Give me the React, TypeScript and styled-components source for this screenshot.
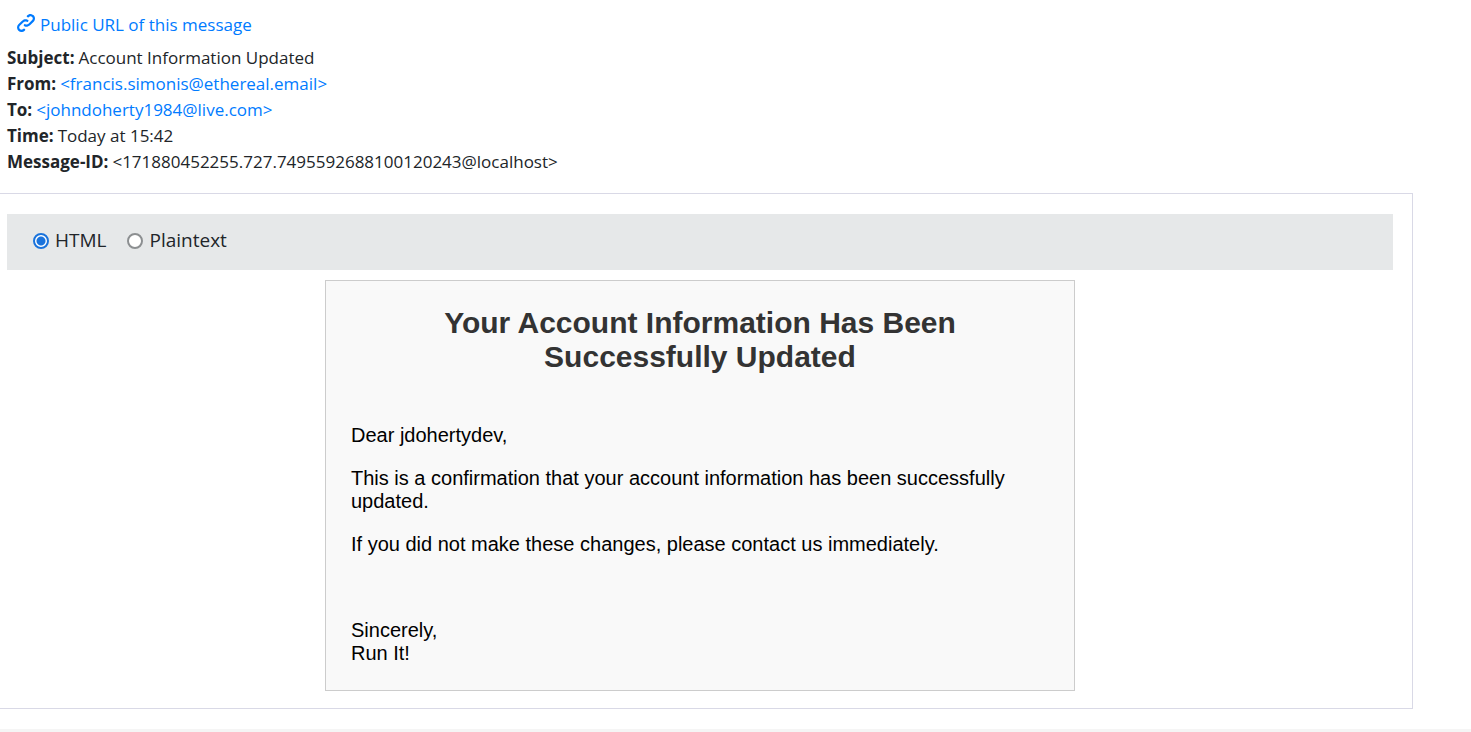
import React from "react";
import styled, { createGlobalStyle } from "styled-components";

const GlobalStyle = createGlobalStyle`
  *, *::before, *::after { box-sizing: border-box; }
  body {
    margin: 0;
    background: #fff;
    color: #212529;
    font-family: "Segoe UI", "Open Sans", "Noto Sans", sans-serif;
    font-size: 17px;
    line-height: 26px;
  }
`;

const Link = styled.a`
  color: #007bff;
  text-decoration: none;
  &:hover { text-decoration: underline; }
`;

const PublicLink = styled(Link)`
  display: inline-flex;
  align-items: center;
  gap: 5px;
  margin: 12px 0 7px 17px;
`;

const LinkIcon = styled.svg`
  width: 18px;
  height: 18px;
  margin-bottom: 4px;
  fill: currentColor;
`;

const Details = styled.dl`
  margin: 0 0 18px 7px;
`;

const Detail = styled.div`
  display: flex;
  gap: 4px;
`;

const Term = styled.dt`
  font-weight: 700;
`;

const Value = styled.dd`
  margin: 0;
`;

const Panel = styled.main`
  margin: 0 58px 20px 0;
  padding: 20px 19px 17px 7px;
  border: 1px solid #d9d9e6;
  border-left: 0;
`;

const FormatBar = styled.fieldset`
  display: flex;
  gap: 21px;
  margin: 0 0 10px;
  padding: 13px 26px 17px;
  border: 0;
  background: #e6e8e9;
`;

const FormatOption = styled.label`
  display: flex;
  align-items: center;
  gap: 6px;
  font-size: 19px;
`;

const Radio = styled.input`
  appearance: none;
  width: 16px;
  height: 16px;
  margin: 2px 0 0;
  border: 2px solid #8c8f91;
  border-radius: 50%;
  background: #fff;
  &:checked {
    border-color: #1a73dc;
    background: radial-gradient(circle, #1a73dc 4px, #fff 5px);
  }
`;

const Email = styled.article`
  max-width: 750px;
  margin: 0 auto;
  padding: 25px;
  border: 1px solid #ccc;
  background: #f9f9f9;
  color: #000;
  font-family: Arial, "Liberation Sans", sans-serif;
  font-size: 20px;
  line-height: 23px;
`;

const EmailTitle = styled.h1`
  margin: 0 0 50px;
  color: #333;
  font-size: 30px;
  line-height: 34px;
  text-align: center;
`;

const Paragraph = styled.p`
  margin: 0 0 20px;
`;

const SignOff = styled.p`
  margin: 63px 0 0;
`;

const Footer = styled.footer`
  height: 3px;
  background: #f5f5f5;
`;

export default function App() {
  return (
    <>
      <GlobalStyle />
      <header>
        <PublicLink href="#message">
          <LinkIcon viewBox="0 0 8 8" aria-hidden="true">
            <path d="M5.88.03c-.18.01-.36.03-.53.09-.27.1-.53.25-.75.47a.5.5 0 1 0 .69.69c.11-.11.24-.17.38-.22.35-.12.78-.07 1.06.22.39.39.39 1.04 0 1.44l-1.5 1.5c-.44.44-.8.48-1.06.47-.26-.01-.41-.13-.41-.13a.5.5 0 1 0-.5.88s.34.22.84.25c.5.03 1.2-.16 1.81-.78l1.5-1.5c.78-.78.78-2.04 0-2.81-.28-.28-.61-.45-.97-.53-.18-.04-.38-.04-.56-.03zm-2 2.31c-.5-.02-1.19.15-1.78.75l-1.5 1.5c-.78.78-.78 2.04 0 2.81.56.56 1.36.72 2.06.47.27-.1.53-.25.75-.47a.5.5 0 1 0-.69-.69c-.11.11-.24.17-.38.22-.35.12-.78.07-1.06-.22-.39-.39-.39-1.04 0-1.44l1.5-1.5c.4-.4.75-.45 1.03-.44.28.01.47.09.47.09a.5.5 0 1 0 .44-.88s-.34-.2-.84-.22z" />
          </LinkIcon>
          Public URL of this message
        </PublicLink>
        <Details>
          <Detail>
            <Term>Subject:</Term>
            <Value>Account Information Updated</Value>
          </Detail>
          <Detail>
            <Term>From:</Term>
            <Value>
              <Link href="mailto:francis.simonis@ethereal.email">&lt;francis.simonis@ethereal.email&gt;</Link>
            </Value>
          </Detail>
          <Detail>
            <Term>To:</Term>
            <Value>
              <Link href="mailto:johndoherty1984@live.com">&lt;johndoherty1984@live.com&gt;</Link>
            </Value>
          </Detail>
          <Detail>
            <Term>Time:</Term>
            <Value>Today at 15:42</Value>
          </Detail>
          <Detail>
            <Term>Message-ID:</Term>
            <Value>&lt;171880452255.727.7495592688100120243@localhost&gt;</Value>
          </Detail>
        </Details>
      </header>
      <Panel id="message">
        <FormatBar aria-label="Message format">
          <FormatOption>
            <Radio type="radio" name="format" defaultChecked />
            HTML
          </FormatOption>
          <FormatOption>
            <Radio type="radio" name="format" />
            Plaintext
          </FormatOption>
        </FormatBar>
        <Email>
          <EmailTitle>Your Account Information Has Been Successfully Updated</EmailTitle>
          <Paragraph>Dear jdohertydev,</Paragraph>
          <Paragraph>
            This is a confirmation that your account information has been successfully updated.
          </Paragraph>
          <Paragraph>If you did not make these changes, please contact us immediately.</Paragraph>
          <SignOff>
            Sincerely,
            <br />
            Run It!
          </SignOff>
        </Email>
      </Panel>
      <Footer />
    </>
  );
}
